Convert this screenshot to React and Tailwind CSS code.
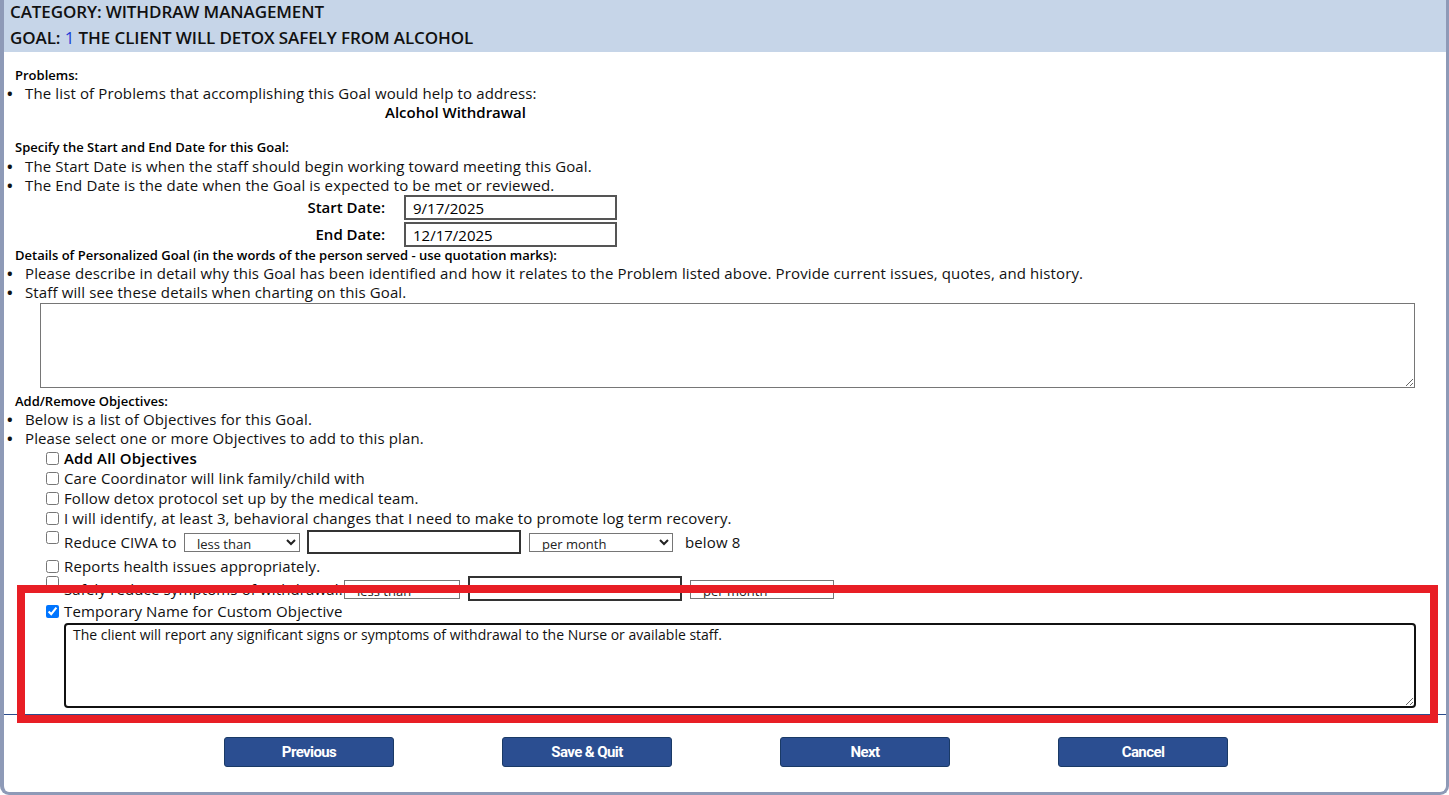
import React from "react";

const F = { fontFamily: '"Open Sans", "Noto Sans", sans-serif' };

function Bullet({ children }) {
  return (
    <div className="flex leading-[19px] text-[15px] tracking-[0.13px] text-[#111]">
      <span className="w-[19px] pl-[1px] shrink-0 font-bold text-[15px]">•</span>
      <span>{children}</span>
    </div>
  );
}

function Heading({ children, cls = "" }) {
  return (
    <div className={"pl-[9px] text-[13px] font-semibold text-black " + cls}>{children}</div>
  );
}

function Check({ checked, children, bold }) {
  return (
    <div className="flex items-center h-[20px] pl-[36px]">
      <input
        type="checkbox"
        defaultChecked={checked}
        className="w-[13px] h-[13px] m-0 mr-[5px] ml-[4px] accent-[#0075ff]"
      />
      <span
        className={
          bold
            ? "text-[15px] font-semibold tracking-[0.15px] text-black"
            : "text-[15px] tracking-[0.13px] text-[#111]"
        }
      >
        {children}
      </span>
    </div>
  );
}

export default function App() {
  return (
    <div className="w-[1449px] h-[795px] bg-white relative" style={F}>
      <div className="h-[795px] border-l-[4px] border-r-[3px] border-b-[3px] border-[#8e9ab7] rounded-b-[9px] overflow-hidden flex flex-col">
        <div className="h-[52px] bg-[#c6d5e8] pl-[6px] text-[17px] font-semibold tracking-[-0.1px] text-[#111]">
          <div className="leading-[24px]">CATEGORY: WITHDRAW MANAGEMENT</div>
          <div className="leading-[28px]">
            GOAL: <span className="text-[#1c3fd6] font-normal">1</span> THE CLIENT WILL DETOX SAFELY FROM ALCOHOL
          </div>
        </div>

        <div className="pl-[2px] pt-[14px]">
          <Heading cls="leading-[18px]">Problems:</Heading>
          <Bullet>The list of Problems that accomplishing this Goal would help to address:</Bullet>
          <div className="pl-[379px] text-[15px] font-semibold leading-[19px] text-black">Alcohol Withdrawal</div>

          <Heading cls="mt-[16px] leading-[19px]">Specify the Start and End Date for this Goal:</Heading>
          <Bullet>The Start Date is when the staff should begin working toward meeting this Goal.</Bullet>
          <Bullet>The End Date is the date when the Goal is expected to be met or reviewed.</Bullet>

          <div className="flex flex-col gap-[2px]">
            <div className="flex items-center h-[25px]">
              <span className="w-[379px] text-right text-[15px] font-semibold text-black">Start Date:</span>
              <input
                defaultValue="9/17/2025"
                className="ml-[19px] w-[213px] h-[25px] border-2 border-[#555] px-[7px] text-[15px] text-black outline-none"
              />
            </div>
            <div className="flex items-center h-[25px]">
              <span className="w-[379px] text-right text-[15px] font-semibold text-black">End Date:</span>
              <input
                defaultValue="12/17/2025"
                className="ml-[19px] w-[213px] h-[25px] border-2 border-[#555] px-[7px] text-[15px] text-black outline-none"
              />
            </div>
          </div>

          <Heading cls="leading-[17px]">
            Details of Personalized Goal (in the words of the person served - use quotation marks):
          </Heading>
          <Bullet>
            Please describe in detail why this Goal has been identified and how it relates to the Problem listed above. Provide current issues, quotes, and history.
          </Bullet>
          <Bullet>Staff will see these details when charting on this Goal.</Bullet>
          <div className="pl-[34px] pt-[1px]">
            <textarea className="block w-[1375px] h-[85px] border border-[#767676] resize-y outline-none" />
          </div>

          <Heading cls="mt-[4px] leading-[18px] text-[13.5px]">Add/Remove Objectives:</Heading>
          <Bullet>Below is a list of Objectives for this Goal.</Bullet>
          <Bullet>Please select one or more Objectives to add to this plan.</Bullet>

          <Check bold>Add All Objectives</Check>
          <Check>Care Coordinator will link family/child with</Check>
          <Check>Follow detox protocol set up by the medical team.</Check>
          <Check>I will identify, at least 3, behavioral changes that I need to make to promote log term recovery.</Check>

          <div className="flex items-start h-[28px] pl-[36px] pt-[2px]">
            <input type="checkbox" className="w-[13px] h-[13px] m-0 mt-[1px] mr-[5px] ml-[4px]" />
            <span className="w-[120px] shrink-0 text-[15px] tracking-[0.13px] text-[#111] mt-[2px] leading-[20px]">
              Reduce CIWA to
            </span>
            <select className="mt-[3px] w-[116px] h-[19px] border border-[#767676] text-[13px] text-[#222] pl-[8px] bg-white">
              <option>less than</option>
            </select>
            <input className="ml-[7px] w-[214px] h-[24px] border-2 border-[#333] outline-none" />
            <select className="ml-[8px] mt-[3px] w-[144px] h-[19px] border border-[#767676] text-[13px] text-[#222] pl-[8px] bg-white">
              <option>per month</option>
            </select>
            <span className="ml-[12px] mt-[2px] text-[15px] tracking-[0.13px] text-[#111] leading-[20px]">below 8</span>
          </div>

          <Check>Reports health issues appropriately.</Check>

          <div className="flex items-start h-[25px] pl-[36px]">
            <input type="checkbox" className="w-[13px] h-[13px] m-0 mr-[5px] ml-[4px]" />
            <span className="w-[280px] shrink-0 text-[15px] tracking-[0.13px] text-[#111] mt-[3px] leading-[20px]">
              Safely reduce symptoms of withdrawal:
            </span>
            <select className="mt-[4px] w-[116px] h-[19px] border border-[#767676] text-[13px] text-[#222] pl-[8px] bg-white">
              <option>less than</option>
            </select>
            <input className="ml-[8px] w-[214px] h-[25px] border-2 border-[#333] outline-none" />
            <select className="ml-[8px] mt-[4px] w-[144px] h-[19px] border border-[#767676] text-[13px] text-[#222] pl-[8px] bg-white">
              <option>per month</option>
            </select>
          </div>

          <Check checked>Temporary Name for Custom Objective</Check>
          <div className="pl-[58px] pt-[2px]">
            <textarea
              defaultValue="The client will report any significant signs or symptoms of withdrawal to the Nurse or available staff."
              className="block w-[1352px] h-[85px] border-2 border-[#111] rounded-[4px] px-[7px] pt-[1px] text-[14px] leading-[17px] text-[#111] resize-y outline-none"
            />
          </div>
        </div>

        <div className="mt-[6px] h-[1px] bg-[#2b4c8c]" />

        <div className="flex justify-center gap-[108px] pt-[22px] pl-[2px]">
          {["Previous", "Save & Quit", "Next", "Cancel"].map((t) => (
            <button
              key={t}
              className="w-[170px] h-[30px] bg-[#2b4e91] border border-[#1a3a66] rounded-[3px] text-white text-[15px] font-bold tracking-[-0.6px]"
              style={{ fontFamily: 'Roboto, "Liberation Sans", sans-serif' }}
            >
              {t}
            </button>
          ))}
        </div>
      </div>

      <div className="absolute left-[17px] top-[585px] w-[1421px] h-[138px] border-[8px] border-[#e81e25] pointer-events-none" />
    </div>
  );
}
